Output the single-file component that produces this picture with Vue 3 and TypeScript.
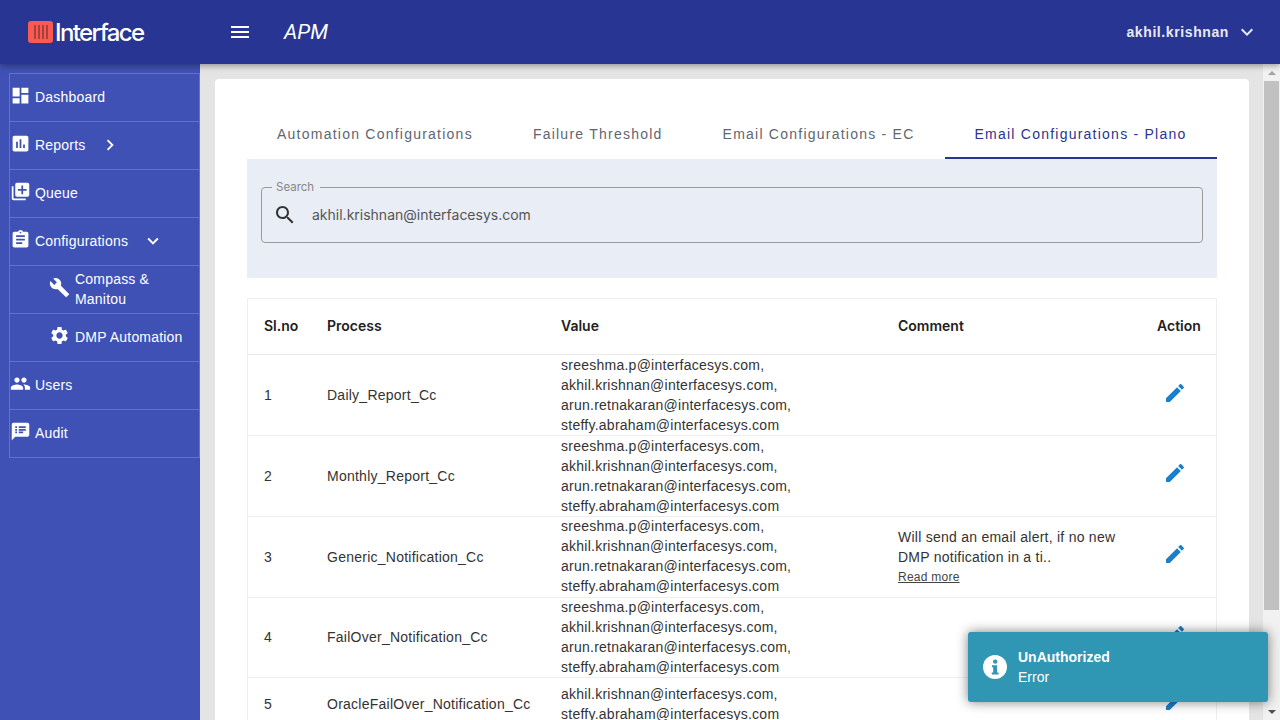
<template>
  <div class="page">
    <header class="topbar">
      <div class="brand">
        <span class="logo-mark"><i></i><i></i><i></i><i></i></span>
        <span class="logo-text">Interface</span>
      </div>
      <svg class="menu-icon" viewBox="0 0 24 24"><path :d="icons.menu" /></svg>
      <span class="app-name">APM</span>
      <div class="user">
        <span>akhil.krishnan</span>
        <svg viewBox="0 0 24 24"><path :d="icons.expand" /></svg>
      </div>
    </header>

    <div class="body">
      <aside class="sidebar">
        <ul class="nav">
          <li v-for="item in navItems" :key="item.label" class="nav-item" :class="{ child: item.child }">
            <svg class="nav-icon" viewBox="0 0 24 24"><path :d="item.icon" /></svg>
            <span class="nav-label">{{ item.label }}</span>
            <svg v-if="item.caret" class="nav-caret" viewBox="0 0 24 24"><path :d="item.caret" /></svg>
          </li>
        </ul>
      </aside>

      <main class="main">
        <section class="card">
          <div class="tabs">
            <div v-for="(tab, i) in tabs" :key="tab" class="tab" :class="{ active: i === 3 }">{{ tab }}</div>
          </div>

          <div class="filter">
            <fieldset class="search">
              <legend>Search</legend>
              <svg viewBox="0 0 24 24"><path :d="icons.search" /></svg>
              <span>akhil.krishnan@interfacesys.com</span>
            </fieldset>
          </div>

          <table class="grid">
            <colgroup>
              <col style="width: 63px" />
              <col style="width: 234px" />
              <col style="width: 337px" />
              <col style="width: 259px" />
              <col style="width: 75px" />
            </colgroup>
            <thead>
              <tr>
                <th>Sl.no</th>
                <th>Process</th>
                <th>Value</th>
                <th>Comment</th>
                <th>Action</th>
              </tr>
            </thead>
            <tbody>
              <tr v-for="row in rows" :key="row.id">
                <td>{{ row.id }}</td>
                <td>{{ row.process }}</td>
                <td class="value">
                  <div v-for="mail in row.value" :key="mail">{{ mail }}</div>
                </td>
                <td class="comment">
                  <template v-if="row.comment">
                    <div>{{ row.comment }}</div>
                    <a class="more">Read more</a>
                  </template>
                </td>
                <td class="action">
                  <svg viewBox="0 0 24 24"><path :d="icons.edit" /></svg>
                </td>
              </tr>
            </tbody>
          </table>
        </section>
      </main>

      <div class="scrollbar">
        <span class="arrow up"></span>
        <div class="thumb"></div>
        <span class="arrow down"></span>
      </div>
    </div>

    <div class="toast">
      <svg viewBox="0 0 24 24">
        <circle cx="12" cy="12" r="12" fill="#fff" />
        <circle cx="12.2" cy="6.6" r="2.2" fill="#2f96b4" />
        <path d="M9 10.2h5v7.2h1.6v2H8.8v-2h1.4v-5.2H9z" fill="#2f96b4" />
      </svg>
      <div>
        <div class="toast-title">UnAuthorized</div>
        <div class="toast-msg">Error</div>
      </div>
    </div>
  </div>
</template>

<script setup lang="ts">
const icons = {
  menu: 'M3 18h18v-2H3v2zm0-5h18v-2H3v2zm0-7v2h18V6H3z',
  expand: 'M16.59 8.59L12 13.17 7.41 8.59 6 10l6 6 6-6z',
  chevron: 'M10 6L8.59 7.41 13.17 12l-4.58 4.59L10 18l6-6z',
  search:
    'M15.5 14h-.79l-.28-.27C15.41 12.59 16 11.11 16 9.5 16 5.91 13.09 3 9.5 3S3 5.91 3 9.5 5.91 16 9.5 16c1.61 0 3.09-.59 4.23-1.57l.27.28v.79l5 4.99L20.49 19l-4.99-5zm-6 0C7.01 14 5 11.99 5 9.5S7.01 5 9.5 5 14 7.01 14 9.5 11.99 14 9.5 14z',
  edit: 'M3 17.25V21h3.75L17.81 9.94l-3.75-3.75L3 17.25zM20.71 7.04c.39-.39.39-1.02 0-1.41l-2.34-2.34c-.39-.39-1.02-.39-1.41 0l-1.83 1.83 3.75 3.75 1.83-1.83z',
}

const navItems = [
  { label: 'Dashboard', icon: 'M3 13h8V3H3v10zm0 8h8v-6H3v6zm10 0h8V11h-8v10zm0-18v6h8V3h-8z' },
  {
    label: 'Reports',
    icon: 'M19 3H5c-1.1 0-2 .9-2 2v14c0 1.1.9 2 2 2h14c1.1 0 2-.9 2-2V5c0-1.1-.9-2-2-2zM9 17H7v-7h2v7zm4 0h-2V7h2v10zm4 0h-2v-4h2v4z',
    caret: icons.chevron,
  },
  {
    label: 'Queue',
    icon: 'M4 6H2v14c0 1.1.9 2 2 2h14v-2H4V6zm16-4H8c-1.1 0-2 .9-2 2v12c0 1.1.9 2 2 2h12c1.1 0 2-.9 2-2V4c0-1.1-.9-2-2-2zm-1 9h-4v4h-2v-4H9V9h4V5h2v4h4v2z',
  },
  {
    label: 'Configurations',
    icon: 'M19 3h-4.18C14.4 1.84 13.3 1 12 1c-1.3 0-2.4.84-2.82 2H5c-1.1 0-2 .9-2 2v14c0 1.1.9 2 2 2h14c1.1 0 2-.9 2-2V5c0-1.1-.9-2-2-2zm-7 0c.55 0 1 .45 1 1s-.45 1-1 1-1-.45-1-1 .45-1 1-1zm2 14H7v-2h7v2zm3-4H7v-2h10v2zm0-4H7V7h10v2z',
    caret: icons.expand,
  },
  {
    label: 'Compass & Manitou',
    child: true,
    icon: 'M22.7 19l-9.1-9.1c.9-2.3.4-5-1.5-6.9-2-2-5-2.4-7.4-1.3L9 6 6 9 1.6 4.7C.4 7.1.9 10.1 2.9 12.1c1.9 1.9 4.6 2.4 6.9 1.5l9.1 9.1c.4.4 1 .4 1.4 0l2.3-2.3c.5-.4.5-1.1.1-1.4z',
  },
  {
    label: 'DMP Automation',
    child: true,
    icon: 'M19.14 12.94c.04-.3.06-.61.06-.94 0-.32-.02-.64-.07-.94l2.03-1.58c.18-.14.23-.41.12-.61l-1.92-3.32c-.12-.22-.37-.29-.59-.22l-2.39.96c-.5-.38-1.03-.7-1.62-.94l-.36-2.54c-.04-.24-.24-.41-.48-.41h-3.84c-.24 0-.43.17-.47.41l-.36 2.54c-.59.24-1.13.57-1.62.94l-2.39-.96c-.22-.08-.47 0-.59.22L2.74 8.87c-.12.21-.08.47.12.61l2.03 1.58c-.05.3-.09.63-.09.94s.02.64.07.94l-2.03 1.58c-.18.14-.23.41-.12.61l1.92 3.32c.12.22.37.29.59.22l2.39-.96c.5.38 1.03.7 1.62.94l.36 2.54c.05.24.24.41.48.41h3.84c.24 0 .44-.17.47-.41l.36-2.54c.59-.24 1.13-.56 1.62-.94l2.39.96c.22.08.47 0 .59-.22l1.92-3.32c.12-.22.07-.47-.12-.61l-2.01-1.58zM12 15.6c-1.98 0-3.6-1.62-3.6-3.6s1.62-3.6 3.6-3.6 3.6 1.62 3.6 3.6-1.62 3.6-3.6 3.6z',
  },
  {
    label: 'Users',
    icon: 'M16 11c1.66 0 2.99-1.34 2.99-3S17.66 5 16 5c-1.66 0-3 1.34-3 3s1.34 3 3 3zm-8 0c1.66 0 2.99-1.34 2.99-3S9.66 5 8 5C6.34 5 5 6.34 5 8s1.34 3 3 3zm0 2c-2.33 0-7 1.17-7 3.5V19h14v-2.5c0-2.33-4.67-3.5-7-3.5zm8 0c-.29 0-.62.02-.97.05 1.16.84 1.97 1.97 1.97 3.45V19h6v-2.5c0-2.33-4.67-3.5-7-3.5z',
  },
  {
    label: 'Audit',
    icon: 'M20 2H4c-1.1 0-1.99.9-1.99 2L2 22l4-4h14c1.1 0 2-.9 2-2V4c0-1.1-.9-2-2-2zM8 14H6v-2h2v2zm0-3H6V9h2v2zm0-3H6V6h2v2zm7 6h-5v-2h5v2zm3-3h-8V9h8v2zm0-3h-8V6h8v2z',
  },
]

const tabs = [
  'Automation Configurations',
  'Failure Threshold',
  'Email Configurations - EC',
  'Email Configurations - Plano',
]

const team = [
  'sreeshma.p@interfacesys.com,',
  'akhil.krishnan@interfacesys.com,',
  'arun.retnakaran@interfacesys.com,',
  'steffy.abraham@interfacesys.com',
]

const rows = [
  { id: 1, process: 'Daily_Report_Cc', value: team, comment: '' },
  { id: 2, process: 'Monthly_Report_Cc', value: team, comment: '' },
  {
    id: 3,
    process: 'Generic_Notification_Cc',
    value: team,
    comment: 'Will send an email alert, if no new DMP notification in a ti..',
  },
  { id: 4, process: 'FailOver_Notification_Cc', value: team, comment: '' },
  {
    id: 5,
    process: 'OracleFailOver_Notification_Cc',
    value: ['akhil.krishnan@interfacesys.com,', 'steffy.abraham@interfacesys.com'],
    comment: '',
  },
]
</script>

<style>
html,
body {
  margin: 0;
  overflow: hidden;
}
</style>

<style scoped>
.page {
  position: relative;
  width: 1280px;
  height: 720px;
  overflow: hidden;
  display: flex;
  flex-direction: column;
  font-family: "Liberation Sans", Arial, sans-serif;
  font-size: 14px;
  background: #e4e4e4;
}

.topbar {
  flex: 0 0 64px;
  display: flex;
  align-items: center;
  background: #283593;
  color: #fff;
  box-shadow: 0 2px 6px rgba(0, 0, 0, 0.35);
  z-index: 2;
}

.brand {
  width: 228px;
  padding-left: 28px;
  box-sizing: border-box;
  display: flex;
  align-items: center;
  gap: 2px;
}

.logo-mark {
  width: 25px;
  height: 22px;
  border-radius: 3px;
  background: #fb5a50;
  display: flex;
  justify-content: center;
  gap: 2px;
  padding: 4px 0;
  box-sizing: border-box;
}

.logo-mark i {
  width: 2px;
  background: #a8403f;
}

.logo-text {
  font-family: Inter, sans-serif;
  font-size: 24px;
  font-weight: 500;
  letter-spacing: -1.6px;
}

.menu-icon {
  width: 24px;
  height: 24px;
  fill: #fff;
}

.app-name {
  margin-left: 32px;
  font-family: Roboto, sans-serif;
  font-size: 21px;
  font-style: italic;
}

.user {
  margin-left: auto;
  margin-right: 21px;
  display: flex;
  align-items: center;
  gap: 6px;
  font-size: 14px;
  font-weight: 700;
  letter-spacing: 0.6px;
  color: #e8eaf6;
}

.user svg {
  width: 24px;
  height: 24px;
  fill: #e8eaf6;
}

.body {
  flex: 1;
  display: flex;
  min-height: 0;
}

.sidebar {
  flex: 0 0 200px;
  background: #3f51b5;
  padding: 9px 0 0 9px;
  box-sizing: border-box;
}

.nav {
  list-style: none;
  margin: 0;
  padding: 0;
  border-top: 1px solid #6373cc;
  border-left: 1px solid #6373cc;
  border-right: 1px solid #6373cc;
}

.nav-item {
  height: 45px;
  padding-bottom: 2px;
  border-bottom: 1px solid #6373cc;
  display: flex;
  align-items: center;
  color: #fff;
  line-height: 20px;
  letter-spacing: 0.2px;
}

.nav-icon {
  width: 21px;
  height: 21px;
  margin: -2px 4px 0 0;
  fill: #fff;
  flex: none;
}

.nav-item.child {
  padding-left: 39px;
}

.nav-item.child .nav-icon {
  margin-right: 5px;
}

.nav-caret {
  width: 22px;
  height: 22px;
  fill: #fff;
  margin-left: 14px;
}

.main {
  flex: 1;
  min-width: 0;
  padding: 15px 14px 0 15px;
}

.card {
  background: #fff;
  border-radius: 4px;
  padding: 32px;
  height: 800px;
}

.tabs {
  display: flex;
  height: 48px;
}

.tab {
  padding: 0 30px;
  line-height: 46px;
  color: #5f6670;
  letter-spacing: 1.235px;
  font-size: 14px;
  white-space: nowrap;
}

.tab.active {
  flex: 1;
  color: #283593;
  border-bottom: 2px solid #283593;
  height: 46px;
}

.filter {
  height: 119px;
  background: #e9edf5;
  padding: 21px 14px 0;
  box-sizing: border-box;
}

.search {
  margin: 0;
  padding: 0 12px 7px 11px;
  height: 63px;
  box-sizing: border-box;
  border: 1px solid #9a9a9a;
  border-radius: 4px;
  display: flex;
  align-items: center;
  gap: 15px;
  color: #555;
  font-family: Inter, sans-serif;
  font-size: 14px;
}

.search legend {
  margin-left: -1px;
  padding: 0 6px 0 4px;
  font-size: 11.5px;
  color: #888;
}

.search svg {
  width: 24px;
  height: 24px;
  fill: #333;
  flex: none;
}

.grid {
  width: 970px;
  margin-top: 20px;
  border-collapse: separate;
  border-spacing: 0;
  table-layout: fixed;
  border: 1px solid #eee;
  border-width: 1px 1px 0;
  box-sizing: border-box;
  color: #333;
  letter-spacing: 0.25px;
}

.grid th {
  height: 55.8px;
  padding: 0 16px 2px;
  box-sizing: border-box;
  text-align: left;
  font-family: Inter, sans-serif;
  font-size: 14px;
  font-weight: 600;
  color: #212121;
  letter-spacing: 0;
  box-shadow: inset 0 -1px 0 #e8e8e8;
}

.grid td {
  padding: 0.74px 16px 0.34px;
  height: 48px;
  line-height: 20px;
  box-shadow: 0 1px 0 #eee;
  vertical-align: middle;
}

.grid td.value {
  padding: 0.1px 0 0.58px 16px;
}

.grid td.action {
  padding: 0 0 4.8px 22px;
}

.action svg {
  display: block;
  width: 24px;
  height: 24px;
  fill: #1b7fcc;
}

.more {
  display: block;
  font-size: 12px;
  color: #444;
  text-decoration: underline;
}

.scrollbar {
  flex: 0 0 17px;
  background: #f1f1f1;
  display: flex;
  flex-direction: column;
  align-items: center;
}

.arrow {
  width: 0;
  height: 0;
  border-left: 4px solid transparent;
  border-right: 4px solid transparent;
}

.arrow.up {
  margin-top: 7px;
  margin-bottom: 6px;
  border-bottom: 4px solid #a3a3a3;
}

.arrow.down {
  margin-top: auto;
  margin-bottom: 6px;
  border-top: 4px solid #505050;
}

.thumb {
  width: 15px;
  height: 529px;
  background: #c1c1c1;
}

.toast {
  position: absolute;
  left: 968px;
  top: 632px;
  width: 300px;
  height: 70px;
  box-sizing: border-box;
  padding: 0 15px;
  border-radius: 3px;
  background: #2f96b4;
  color: #fff;
  display: flex;
  align-items: center;
  gap: 11px;
  line-height: 20px;
  box-shadow: 0 0 12px rgba(0, 0, 0, 0.5);
  z-index: 3;
}

.toast svg {
  width: 24px;
  height: 24px;
  flex: none;
}

.toast-title {
  font-weight: 700;
}
</style>
